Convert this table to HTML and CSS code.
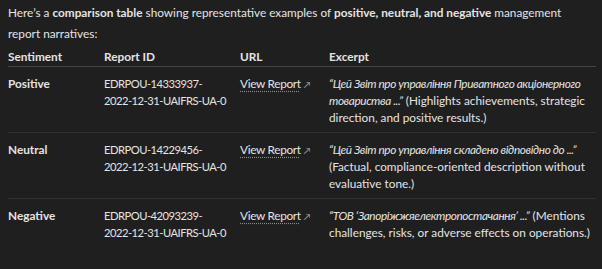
FILE: index.html
```html
<!DOCTYPE html>
<html>
<head>
<meta charset="utf-8">
<link rel="stylesheet" href="styles.css">
</head>
<body>
<div class="answer">
  <p class="intro">Here’s a <strong>comparison table</strong> showing representative examples of <strong>positive, neutral, and negative</strong> management report narratives:</p>
  <table class="cmp">
    <colgroup>
      <col class="c1"><col class="c2"><col class="c3"><col class="c4">
    </colgroup>
    <thead>
      <tr><th>Sentiment</th><th>Report ID</th><th>URL</th><th>Excerpt</th></tr>
    </thead>
    <tbody>
      <tr>
        <td><strong>Positive</strong></td>
        <td class="rid">EDRPOU-14333937-<br>2022-12-31-UAIFRS-UA-0</td>
        <td><a class="link">View Report</a><span class="ext">&#8599;</span></td>
        <td><em>“Цей Звіт про управління Приватного акціонерного товариства ...”</em> (Highlights achievements, strategic direction, and positive results.)</td>
      </tr>
      <tr>
        <td><strong>Neutral</strong></td>
        <td class="rid">EDRPOU-14229456-<br>2022-12-31-UAIFRS-UA-0</td>
        <td><a class="link">View Report</a><span class="ext">&#8599;</span></td>
        <td><em>“Цей Звіт про управління складено відповідно до ...”</em> (Factual, compliance-oriented description without evaluative tone.)</td>
      </tr>
      <tr class="last">
        <td><strong>Negative</strong></td>
        <td class="rid">EDRPOU-42093239-<br>2022-12-31-UAIFRS-UA-0</td>
        <td><a class="link">View Report</a><span class="ext">&#8599;</span></td>
        <td><em>“ТОВ ‘Запоріжжяелектропостачання’ ...”</em> (Mentions challenges, risks, or adverse effects on operations.)</td>
      </tr>
    </tbody>
  </table>
</div>
</body>
</html>
```
FILE: styles.css
```css
html, body {
  margin: 0;
  background: #1f1f1f;
}
body {
  color: #e4e4e4;
  font-family: Lato, "Noto Sans", sans-serif;
  font-size: 11.8px;
}
.answer {
  padding: 2px 6px 0 8px;
}
.intro {
  margin: 0 0 1px 0;
  padding-right: 24px;
  line-height: 21px;
}
.intro strong { font-weight: 700; }
.cmp {
  width: 100%;
  border-collapse: collapse;
  table-layout: fixed;
}
.c1 { width: 96px; }
.c2 { width: 136px; }
.c3 { width: 89px; }
.cmp th {
  text-align: left;
  font-weight: 700;
  padding: 3px 0 1px 0;
  line-height: 17px;
  border-bottom: 1px solid #444444;
}
.cmp td {
  vertical-align: top;
  padding: 8px 6px 6px 0;
  line-height: 17px;
  border-bottom: 1px solid #313131;
}
.cmp td.rid {
  white-space: nowrap;
  font-size: 11.2px;
  letter-spacing: -0.5px;
  padding-right: 0;
}
.cmp em {
  letter-spacing: -0.4px;
}
.cmp tr.last td { border-bottom: none; }
.link {
  color: #e4e4e4;
  letter-spacing: -0.3px;
  text-decoration: underline dotted #8a8a8a;
  text-underline-offset: 3px;
}
.ext {
  font-size: 9px;
  line-height: 1;
  color: #aaaaaa;
  margin-left: 3px;
}
```
